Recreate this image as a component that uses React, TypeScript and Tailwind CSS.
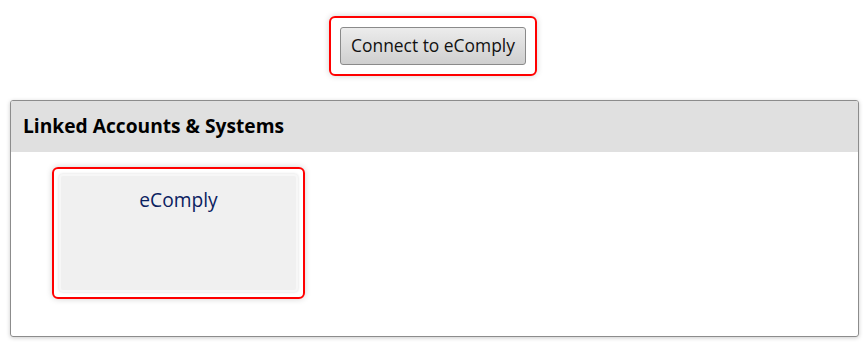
export default function App() {
  return (
    <div className="w-[866px] h-[360px] bg-white font-['Open_Sans',sans-serif] text-black">
      <div className="flex justify-center pt-[16px]">
        <div className="rounded-[6px] border-2 border-[#ff0000] p-[9px] shadow-[0_0_6px_rgba(0,0,0,0.18)]">
          <button className="h-[38px] px-[10px] rounded-[3px] border border-[#8a8a8a] bg-[linear-gradient(#ececec,#cfcfcf)] text-[17.4px] leading-none text-[#111]">
            Connect to eComply
          </button>
        </div>
      </div>
      <div className="ml-[10px] w-[849px] mt-[24px] h-[237px] rounded-[3px] border border-[#8c8c8c] shadow-[0_1px_4px_rgba(0,0,0,0.2)] overflow-hidden">
        <div className="h-[51px] bg-[#e0e0e0] flex items-center px-[12px]">
          <h2 className="text-[19.2px] font-bold">Linked Accounts &amp; Systems</h2>
        </div>
        <div className="pt-[15px] pl-[41px]">
          <div className="w-[253px] h-[132px] rounded-[6px] border-2 border-[#ff0000] p-[5px] shadow-[0_0_6px_rgba(0,0,0,0.18)]">
            <div className="h-full rounded-[4px] bg-[#f0f0f0] border-2 border-[#f7f7f7] shadow-[0_0_3px_rgba(0,0,0,0.15)] flex justify-center pt-[12px]">
              <span className="text-[19.2px] font-medium text-[#0a2160] leading-[24px]">eComply</span>
            </div>
          </div>
        </div>
      </div>
    </div>
  );
}
